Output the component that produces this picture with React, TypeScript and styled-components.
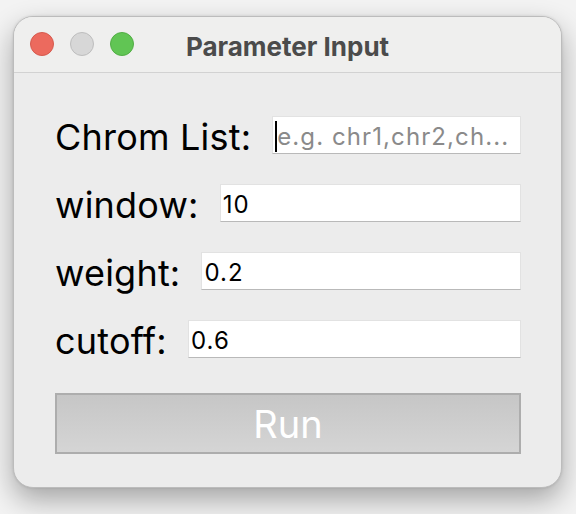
import React from "react";
import styled, { createGlobalStyle } from "styled-components";

const GlobalStyle = createGlobalStyle`
  html, body {
    margin: 0;
    padding: 0;
    background: #f3f3f3;
  }
  body {
    width: 576px;
    height: 514px;
    overflow: hidden;
    font-family: Inter, "Liberation Sans", sans-serif;
  }
`;

type fieldType = {
  label: string;
  value?: string;
  placeholder?: string;
  focused?: boolean;
};

const fields: fieldType[] = [
  { label: "Chrom List:", placeholder: "e.g. chr1,chr2,ch...", focused: true },
  { label: "window:", value: "10" },
  { label: "weight:", value: "0.2" },
  { label: "cutoff:", value: "0.6" },
];

const App: React.FC = () => {
  return (
    <>
      <GlobalStyle />
      <Desktop>
        <Window>
          <TitleBar>
            <Lights>
              <Light color="#ec6a5e" border="#d55a4e" />
              <Light color="#d7d7d7" border="#bdbdbd" />
              <Light color="#61c554" border="#52ad45" />
            </Lights>
            <Title>Parameter Input</Title>
          </TitleBar>
          <Body>
            <Form>
              {fields.map((f) => (
                <Row key={f.label}>
                  <Label>{f.label}</Label>
                  <Entry>
                    {f.focused && <Caret />}
                    <EntryInput
                      defaultValue={f.value}
                      placeholder={f.placeholder}
                    />
                  </Entry>
                </Row>
              ))}
            </Form>
            <RunButton disabled>Run</RunButton>
          </Body>
        </Window>
      </Desktop>
    </>
  );
};

const Desktop = styled.div`
  padding: 16px 0 0 13px;
`;

const Window = styled.div`
  display: flex;
  flex-direction: column;
  width: 549px;
  height: 472px;
  box-sizing: border-box;
  border: 1px solid #bcbcbc;
  border-radius: 20px;
  overflow: hidden;
  background: #ececec;
  box-shadow: 0 12px 28px rgba(0, 0, 0, 0.32), 0 0 3px rgba(0, 0, 0, 0.12);
`;

const TitleBar = styled.div`
  display: flex;
  align-items: center;
  justify-content: center;
  position: relative;
  height: 55px;
  background: #efefee;
  border-bottom: 1px solid #d2d2d2;
`;

const Lights = styled.div`
  position: absolute;
  left: 16px;
  top: 15px;
  display: flex;
  gap: 16px;
`;

const Light = styled.span<{ color: string; border: string }>`
  width: 24px;
  height: 24px;
  box-sizing: border-box;
  border-radius: 50%;
  background: ${(p) => p.color};
  border: 1px solid ${(p) => p.border};
`;

const Title = styled.div`
  font-family: Inter, "Liberation Sans", sans-serif;
  font-weight: 700;
  font-size: 26px;
  color: #4b4b4b;
  margin-top: 3px;
`;

const Body = styled.div`
  display: flex;
  flex-direction: column;
  padding: 43px 40px 0 41px;
`;

const Form = styled.div`
  display: flex;
  flex-direction: column;
  gap: 30px;
`;

const Row = styled.div`
  display: flex;
  align-items: center;
  gap: 21px;
  height: 38px;
`;

const Label = styled.span`
  font-size: 36px;
  letter-spacing: 0.2px;
  color: #000;
  white-space: nowrap;
  line-height: 38px;
  margin-top: 4px;
`;

const Entry = styled.div`
  flex: 1;
  min-width: 0;
  display: flex;
  align-items: center;
  height: 38px;
  box-sizing: border-box;
  background: #fff;
  border: 1px solid #e2e2e2;
  border-bottom-color: #b9b9b9;
  padding-left: 2px;
`;

const Caret = styled.span`
  width: 2px;
  height: 31px;
  background: #000;
  flex-shrink: 0;
  margin-top: 2px;
`;

const EntryInput = styled.input`
  flex: 1;
  width: 100%;
  min-width: 0;
  border: none;
  outline: none;
  background: transparent;
  padding: 0;
  margin-top: 2px;
  font-family: Inter, "Liberation Sans", sans-serif;
  font-size: 24px;
  letter-spacing: 1.1px;
  color: #000;
  &::placeholder {
    color: #8a8a8a;
  }
`;

const RunButton = styled.button`
  margin-top: 35px;
  height: 61px;
  border: 2px solid #adadad;
  background: linear-gradient(#c6c6c6, #d5d5d5);
  color: #fff;
  font-family: Inter, "Liberation Sans", sans-serif;
  font-size: 38px;
  padding: 0;
`;

export default App;
